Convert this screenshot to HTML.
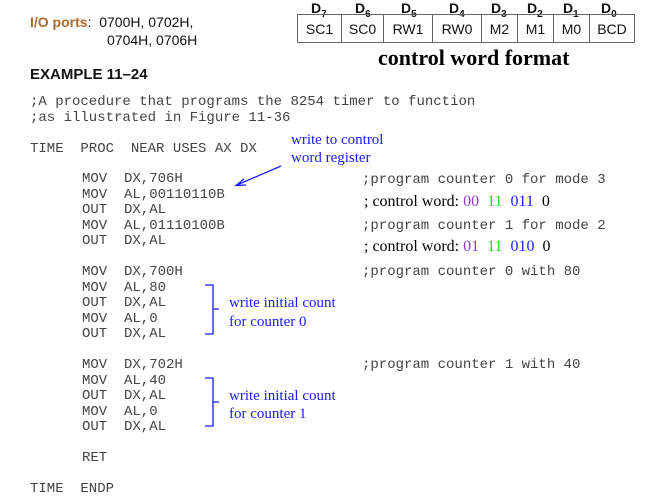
<!DOCTYPE html>
<html><head><meta charset="utf-8"><style>
*{margin:0;padding:0;box-sizing:border-box}
body{width:667px;height:494px;background:#fff;position:relative;overflow:hidden;font-family:"Liberation Sans",sans-serif}
.a{position:absolute;white-space:pre}
.c{font-family:"Liberation Mono",monospace;font-size:14px;color:#444;line-height:16px}
.s{font-family:"Liberation Serif",serif}
.b{color:#1a1aff}
table{position:absolute;left:297px;top:14px;border-collapse:collapse}
td{border:1px solid #666;height:28px;text-align:center;font-size:14px;color:#111;padding:0}
.h{position:absolute;top:0;font-weight:bold;font-size:14px;color:#111}
.h sub{font-size:10px}
</style></head><body>
<div class="a" style="left:30px;top:14px;font-size:14px;color:#111"><b style="color:#b06a2a">I/O ports</b>:  0700H, 0702H,</div>
<div class="a" style="left:107px;top:32px;font-size:14px;color:#111">0704H, 0706H</div>
<div class="a" style="left:30px;top:66px;font-size:15px;font-weight:bold;color:#111">EXAMPLE 11–24</div>

<div class="h" style="left:311px">D<sub>7</sub></div>
<div class="h" style="left:355px">D<sub>6</sub></div>
<div class="h" style="left:401px">D<sub>5</sub></div>
<div class="h" style="left:449px">D<sub>4</sub></div>
<div class="h" style="left:491px">D<sub>3</sub></div>
<div class="h" style="left:527px">D<sub>2</sub></div>
<div class="h" style="left:563px">D<sub>1</sub></div>
<div class="h" style="left:601px">D<sub>0</sub></div>
<table><tr>
<td style="width:44px">SC1</td><td style="width:42px">SC0</td><td style="width:49px">RW1</td><td style="width:49px">RW0</td><td style="width:36px">M2</td><td style="width:36px">M1</td><td style="width:36px">M0</td><td style="width:45px">BCD</td>
</tr></table>
<div class="a s" style="left:378px;top:45px;font-size:22px;font-weight:bold;color:#000">control word format</div>

<div class="a c" style="left:30px;top:94px">;A procedure that programs the 8254 timer to function
;as illustrated in Figure 11-36</div>
<div class="a c" style="left:30px;top:141px">TIME  PROC  NEAR USES AX DX</div>
<div class="a c" style="left:82px;top:172px;line-height:15.5px">MOV  DX,706H
MOV  AL,00110110B
OUT  DX,AL
MOV  AL,01110100B
OUT  DX,AL

MOV  DX,700H
MOV  AL,80
OUT  DX,AL
MOV  AL,0
OUT  DX,AL

MOV  DX,702H
MOV  AL,40
OUT  DX,AL
MOV  AL,0
OUT  DX,AL

RET</div>
<div class="a c" style="left:30px;top:481px">TIME  ENDP</div>

<div class="a c" style="left:362px;top:172px">;program counter 0 for mode 3</div>
<div class="a s" style="left:364px;top:193px;font-size:16px;color:#000">; control word: <span style="color:#8a3fc0">00</span>  <span style="color:#22dd22">11</span>  <span style="color:#1a1aff">011</span>  0</div>
<div class="a c" style="left:362px;top:218px">;program counter 1 for mode 2</div>
<div class="a s" style="left:364px;top:238px;font-size:16px;color:#000">; control word: <span style="color:#8a3fc0">01</span>  <span style="color:#22dd22">11</span>  <span style="color:#1a1aff">010</span>  0</div>
<div class="a c" style="left:362px;top:264px">;program counter 0 with 80</div>
<div class="a c" style="left:362px;top:357px">;program counter 1 with 40</div>

<div class="a s b" style="left:291px;top:131px;font-size:15px;line-height:18px">write to control
word register</div>
<div class="a s b" style="left:229px;top:294px;font-size:15px;line-height:19px">write initial count
for counter 0</div>
<div class="a s b" style="left:229px;top:387px;font-size:15px;line-height:18px">write initial count
for counter 1</div>

<svg class="a" style="left:0;top:0" width="667" height="494">
<g stroke="#1a1aff" stroke-width="1.3" fill="none">
<line x1="281" y1="166" x2="237" y2="185"/>
<path d="M244 179 L236 185.5 L246 185"/>
<path d="M205 285 H213 V334 H205 M213 309 H219"/>
<path d="M205 378 H213 V426 H205 M213 402 H219"/>
</g>
</svg>
</body></html>
